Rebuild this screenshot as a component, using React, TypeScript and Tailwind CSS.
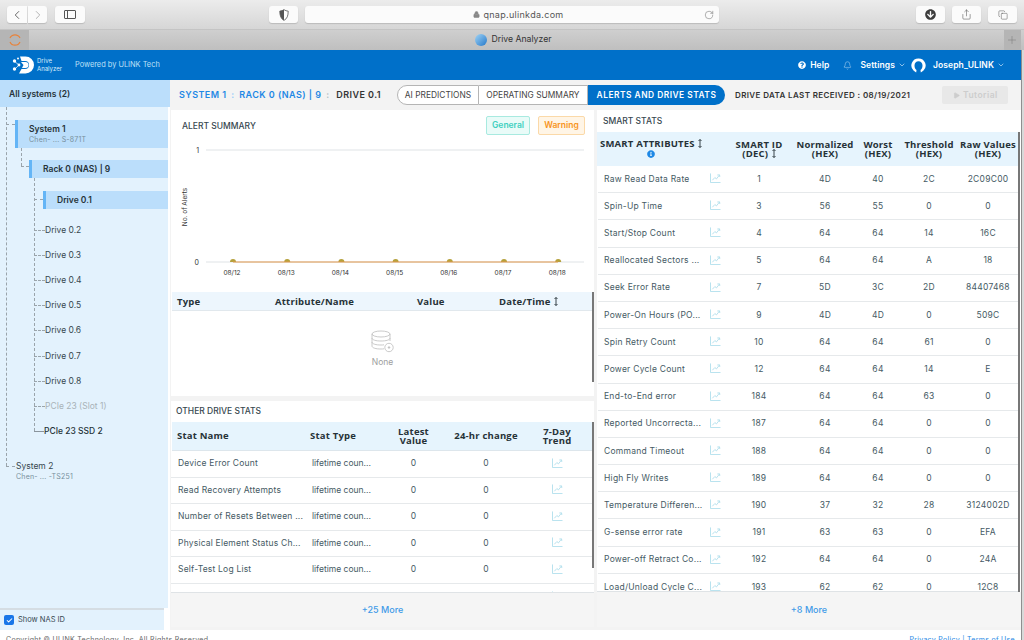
import React from "react";
import { ChevronLeft, ChevronRight, Lock, RotateCw, Share, Copy, Bell, ChevronDown, Play, Plus, Check } from "lucide-react";
import { FaQuestionCircle, FaInfoCircle, FaArrowCircleDown } from "react-icons/fa";

const Trend = () => (
  <svg width="11" height="10" viewBox="0 0 12 11" fill="none" stroke="#a8dcea" strokeWidth="0.9" className="block -mt-[2px]">
    <path d="M0.5 0.5v10h11" />
    <path d="M2.5 8l2.8-3 1.700 1.500 3.200-4" />
    <path d="M8 2.200l2.500-0.200 0.200 2.400" />
  </svg>
);
const Sort = () => (
  <svg width="4" height="9" viewBox="0 0 4 9" fill="none" stroke="#263238" strokeWidth="0.9" className="inline-block align-[-1px] ml-[1px]">
    <path d="M2 0.500v8M0.500 2l1.500-1.500 1.500 1.500M0.500 7l1.500 1.500 1.500-1.500" />
  </svg>
);

const smart: string[][] = [
  ["Raw Read Data Rate", "1", "4D", "40", "2C", "2C09C00"],
  ["Spin-Up Time", "3", "56", "55", "0", "0"],
  ["Start/Stop Count", "4", "64", "64", "14", "16C"],
  ["Reallocated Sectors ...", "5", "64", "64", "A", "18"],
  ["Seek Error Rate", "7", "5D", "3C", "2D", "84407468"],
  ["Power-On Hours (PO...", "9", "4D", "4D", "0", "509C"],
  ["Spin Retry Count", "10", "64", "64", "61", "0"],
  ["Power Cycle Count", "12", "64", "64", "14", "E"],
  ["End-to-End error", "184", "64", "64", "63", "0"],
  ["Reported Uncorrecta...", "187", "64", "64", "0", "0"],
  ["Command Timeout", "188", "64", "64", "0", "0"],
  ["High Fly Writes", "189", "64", "64", "0", "0"],
  ["Temperature Differen...", "190", "37", "32", "28", "3124002D"],
  ["G-sense error rate", "191", "63", "63", "0", "EFA"],
  ["Power-off Retract Co...", "192", "64", "64", "0", "24A"],
  ["Load/Unload Cycle C...", "193", "62", "62", "0", "12C8"],
];
const stats = ["Device Error Count", "Read Recovery Attempts", "Number of Resets Between ...", "Physical Element Status Ch...", "Self-Test Log List"];
const drives = ["Drive 0.2", "Drive 0.3", "Drive 0.4", "Drive 0.5", "Drive 0.6", "Drive 0.7", "Drive 0.8"];
const days = ["08/12", "08/13", "08/14", "08/15", "08/16", "08/17", "08/18"];
const hdr = "font-['Open_Sans',sans-serif] font-bold text-[9.5px] leading-[9px] tracking-[0.2px] text-[#263238]";

const Dash = ({ c }: { c: string }) => <span className={"absolute border-[#9aa4ab] border-dashed " + c} />;

function Logo() {
  return (
    <svg width="22" height="18" viewBox="0 0 22 18" className="shrink-0">
      <path d="M8 0.500h5.500a8.500 8.500 0 0 1 0 17H7l2.500-4.500h3.500a4 4 0 0 0 0-8H9.500z" fill="#fff" />
      <path d="M9 6h4.500a3 3 0 0 1 0 6h-3.500l1.500-3z" fill="#fff" />
      <path d="M2 5l5 4-4 4" stroke="#fff" strokeWidth="0.7" fill="none" />
      <circle cx="2.500" cy="5" r="1.700" fill="#fff" />
      <circle cx="6" cy="2.500" r="1" fill="#fff" />
      <circle cx="2.500" cy="13" r="1.700" fill="#fff" />
      <circle cx="7" cy="9" r="1.400" fill="#fff" />
    </svg>
  );
}

function Chrome() {
  const b = "h-[17px] rounded-[3px] bg-[#fbfbfb] flex items-center justify-center shadow-[0_1px_1px_#bbb] text-[#555]";
  return (
    <div className="h-[30px] shrink-0 bg-gradient-to-b from-[#ececec] to-[#d6d6d6] flex items-center border-b border-[#c4c4c4] relative">
      <div className={b + " w-[20px] ml-[7px] rounded-r-none"}><ChevronLeft size={14} strokeWidth={1.5} /></div>
      <div className={b + " w-[19px] ml-[1px] rounded-l-none text-[#aaa]"}><ChevronRight size={14} strokeWidth={1.5} /></div>
      <div className={b + " w-[30px] ml-[8px]"}>
        <span className="w-[12px] h-[9px] border border-[#555] rounded-[1px] flex"><span className="w-[3px] border-r border-[#555]" /></span>
      </div>
      <div className={b + " w-[29px] ml-[184px]"}>
        <svg width="10" height="12" viewBox="0 0 10 12"><path d="M5 0.600c1.300 1 2.700 1.400 4.200 1.500 0 4.500-1 7.600-4.200 9.300C1.800 9.700.8 6.600.8 2.100 2.300 2 3.700 1.600 5 .6z" fill="#fff" stroke="#555" strokeWidth="0.8" /><path d="M5 .6v10.800C1.800 9.700.8 6.600.8 2.100 2.300 2 3.700 1.600 5 .6z" fill="#555" /></svg>
      </div>
      <div className={b + " w-[414px] ml-[7px] relative text-[#444] text-[9px] gap-[3px] pl-[13px]"}>
        <Lock size={7} fill="#888" className="text-[#888]" /><span className="tracking-[0.3px]">qnap.ulinkda.com</span>
        <RotateCw size={10} strokeWidth={1.2} className="absolute right-[5px] text-[#666]" />
      </div>
      <div className={b + " w-[29px] ml-[197px]"}><FaArrowCircleDown size={11} className="text-[#3d3d3d]" /></div>
      <div className={b + " w-[29px] ml-[7px]"}><Share size={11} strokeWidth={1.2} /></div>
      <div className={b + " w-[29px] ml-[7px]"}><Copy size={10} strokeWidth={1.2} /></div>
    </div>
  );
}

function Tabs() {
  return (
    <div className="h-[20px] shrink-0 bg-gradient-to-b from-[#cfcfcf] to-[#bfbfbf] flex items-center justify-between text-[8.7px] text-[#333]">
      <div className="w-[29px] h-full bg-[#b5b5b5] flex items-center justify-center">
        <svg width="14" height="14" viewBox="0 0 14 14" fill="none" stroke="#e8823a" strokeWidth="1.2"><path d="M2 5a5.500 5.500 0 0 1 10 0" /><path d="M2 9a5.500 5.500 0 0 0 10 0" /></svg>
      </div>
      <div className="flex items-center gap-[4px] ml-[-6px]">
        <span className="w-[12px] h-[12px] rounded-full bg-gradient-to-br from-[#9fd4f5] to-[#1d78c9]" />
        <span>Drive Analyzer</span>
      </div>
      <div className="w-[17px] h-full mr-[3px] bg-[#b5b5b5] flex items-center justify-center text-[#777]"><Plus size={12} strokeWidth={1} /></div>
    </div>
  );
}

function Header() {
  return (
    <div className="h-[30px] shrink-0 bg-[#0070c9] flex items-center text-white">
      <div className="ml-[12px]"><Logo /></div>
      <div className="ml-[3px] text-[6px] leading-[8px] text-[#d8ecfb] w-[26px]">Drive<br />Analyzer</div>
      <div className="ml-[12px] text-[7.4px] text-[#bfe0f8]">Powered by ULINK Tech</div>
      <div className="ml-auto flex items-center text-[8.5px] font-semibold tracking-[0.1px]">
        <FaQuestionCircle size={8} />
        <span className="ml-[4px]">Help</span>
        <Bell size={9} strokeWidth={1.2} className="ml-[14px] text-[#cfe6f8]" />
        <span className="ml-[8px]">Settings</span>
        <ChevronDown size={8} className="ml-[3px] text-[#cfe6f8]" />
        <svg width="15" height="15" viewBox="0 0 15 15" className="ml-[5px]">
          <path d="M7.500 0.500a7 7 0 0 0-5 12c0.600 0.600 2.700 2 2.700 2l0.300-2.500c-1.300-.8-2-2.500-2-4.500 0-2.500 1.600-4.200 4-4.200s4 1.700 4 4.200c0 2-.7 3.700-2 4.500l0.300 2.500s2.100-1.400 2.700-2a7 7 0 0 0-5-12z" fill="#fff" />
        </svg>
        <span className="ml-[7px]">Joseph_ULINK</span>
        <ChevronDown size={8} className="ml-[3px] mr-[16px] text-[#cfe6f8]" />
      </div>
    </div>
  );
}

function Sidebar() {
  return (
    <div className="w-[170px] shrink-0 flex flex-col text-[#37474f]">
      <div className="h-[27px] shrink-0 bg-[#bbdefb] flex items-center pl-[9px] pt-[1px] text-[8.5px] font-semibold text-[#263238]">All systems (2)</div>
      <div className="flex-1 w-[168px] bg-[#e3f2fd] relative pt-[13px] text-[8.5px]">
        <Dash c="left-[6px] top-0 h-[359px] border-l" />
        <Dash c="left-[6px] top-[17px] w-[9px] border-t" />
        <Dash c="left-[6px] top-[359px] w-[9px] border-b" />
        <div className="ml-[15px] h-[28px] bg-[#bbdefb] border-l-[3px] border-[#64b5f6] pl-[11px] flex flex-col justify-center">
          <div className="font-semibold text-[#263238] leading-[11px]">System 1</div>
          <div className="text-[7px] leading-[9px] text-[#78909c] tracking-[0.2px]">Chen- ... S-871T</div>
        </div>
        <Dash c="left-[21px] top-[41px] h-[18px] border-l" />
        <Dash c="left-[21px] top-[59px] w-[8px] border-b" />
        <div className="ml-[29px] mt-[12px] h-[18px] bg-[#bbdefb] border-l-[3px] border-[#64b5f6] pl-[11px] flex items-center font-semibold text-[#263238]">Rack 0 (NAS) | 9</div>
        <Dash c="left-[34px] top-[71px] h-[253px] border-l" />
        <Dash c="left-[34px] top-[92px] w-[9px] border-t" />
        <div className="ml-[43px] mt-[13px] h-[18px] bg-[#bbdefb] border-l-[3px] border-[#64b5f6] pl-[11px] flex items-center font-semibold text-[#263238]">Drive 0.1</div>
        <div className="mt-[8.5px]">
          {drives.map((d) => (
            <div key={d} className="h-[25.2px] ml-[34px] flex items-center">
              <span className="w-[11px] border-t border-dashed border-[#9aa4ab]" />{d}
            </div>
          ))}
          <div className="h-[25.2px] ml-[34px] flex items-center text-[#a9b2b8]"><span className="w-[11px] border-t border-dashed border-[#9aa4ab]" />PCIe 23 (Slot 1)</div>
          <div className="h-[25.2px] ml-[34px] flex items-center font-medium text-[#263238]"><span className="w-[10px] border-t border-[#8a949c]" />PCIe 23 SSD 2</div>
        </div>
        <div className="ml-[16px] mt-[17px] text-[#37474f] leading-[11px]">System 2</div>
        <div className="ml-[16px] text-[7px] leading-[9px] text-[#78909c] tracking-[0.2px]">Chen- ... -TS251</div>
      </div>
      <div className="h-[22px] w-[164px] shrink-0 border-t-2 border-[#d5dde3] bg-[#e3f2fd] flex items-center pl-[4px] gap-[4px] text-[7.5px]">
        <span className="w-[10px] h-[10px] rounded-[2px] bg-[#1976e8] flex items-center justify-center"><Check size={7} strokeWidth={3.5} className="text-white" /></span>
        Show NAS ID
      </div>
    </div>
  );
}

function Crumbs() {
  return (
    <div className="h-[30px] shrink-0 flex items-center text-[9px] tracking-[0.45px]">
      <div className="ml-[9px] font-semibold text-[#1e88e5] whitespace-nowrap">SYSTEM 1 <span className="text-[#90caf9] mx-[2px]">:</span> RACK 0 (NAS) | 9 <span className="text-[#b0bec5] mx-[2px]">:</span> <span className="text-[#333] ml-[2px]">DRIVE 0.1</span></div>
      <div className="ml-[16px] h-[20px] flex text-[8.4px] tracking-[0px] whitespace-nowrap">
        <div className="w-[82px] border border-[#b5b5b5] rounded-l-full bg-white flex items-center justify-center text-[#444]">AI PREDICTIONS</div>
        <div className="w-[109px] border-y border-r border-[#b5b5b5] bg-white flex items-center justify-center text-[#444]">OPERATING SUMMARY</div>
        <div className="w-[137px] rounded-r-full bg-[#0070c9] text-white font-semibold tracking-[0.5px] flex items-center justify-center">ALERTS AND DRIVE STATS</div>
      </div>
      <div className="ml-[10px] text-[8px] font-semibold tracking-[0.38px] text-[#333] whitespace-nowrap">DRIVE DATA LAST RECEIVED : 08/19/2021</div>
      <div className="ml-[32px] w-[66px] h-[18px] rounded-[2px] bg-[#e8e8e8] text-[#cdcdcd] font-semibold flex items-center justify-center gap-[3px] text-[8.5px]"><Play size={7} fill="#cdcdcd" />Tutorial</div>
    </div>
  );
}

function AlertChart() {
  return (
    <svg width="423" height="150" viewBox="0 0 423 150" className="block">
      <text x="0" y="0" transform="translate(16 67) rotate(-90)" fontSize="6.5" textAnchor="middle" fill="#333">No. of Alerts</text>
      <text x="28" y="12.500" fontSize="7" textAnchor="end" fill="#333">1</text>
      <text x="28" y="124.500" fontSize="7" textAnchor="end" fill="#333">0</text>
      <line x1="35" x2="413" y1="10" y2="10" stroke="#dfe3e6" />
      <line x1="35" x2="413" y1="122" y2="122" stroke="#dfe3e6" />
      {days.map((d, i) => (
        <g key={d}>
          <path d={`M${59 + i * 54.2} 122a3 3 0 0 1 6 0z`} fill="#b5a13c" />
          <text x={62 + i * 54.2 - 1} y="135" fontSize="6.5" textAnchor="middle" fill="#333">{d}</text>
        </g>
      ))}
      <line x1="62" x2="387" y1="122" y2="122" stroke="#e0974a" />
    </svg>
  );
}

function EmptyIcon() {
  return (
    <svg width="24" height="24" viewBox="0 0 24 24" fill="none" stroke="#bdbdbd" strokeWidth="0.8">
      <ellipse cx="10" cy="4" rx="9" ry="3" />
      <path d="M1 4v12c0 2 4 3 9 3 1 0 2 0 3-.2M19 4v7M1 8c0 2 4 3 9 3s9-1 9-3M1 12c0 2 4 3 9 3 1 0 2 0 3-.2" />
      <circle cx="18" cy="17.500" r="4.200" fill="#fff" />
      <circle cx="18" cy="17.500" r="0.800" fill="#bdbdbd" />
    </svg>
  );
}

function Left() {
  return (
    <div className="w-[423px] shrink-0 flex flex-col gap-[5px]">
      <div className="h-[286px] bg-white shrink-0 flex flex-col relative">
        <div className="h-[30px] flex items-center pl-[11px] pr-[9px] text-[8.5px] text-[#37474f] font-medium">
          <span className="mt-[2px]">ALERT SUMMARY</span>
          <span className="ml-auto w-[44px] h-[19px] border border-[#a8eae0] bg-[#e9fbf8] rounded-[2px] text-[#3fd0c0] flex items-center justify-center font-semibold">General</span>
          <span className="ml-[8px] w-[47px] h-[19px] border border-[#fbd9a8] bg-[#fff5e6] rounded-[2px] text-[#f7941d] flex items-center justify-center font-semibold">Warning</span>
        </div>
        <AlertChart />
        <div className="h-[19px] w-[421px] ml-[1px] mt-[2px] bg-[#edf6fd] grid grid-cols-[98px_142px_82px_1fr] items-center pl-[5px] border-b border-[#e1e8ed]">
          <span className={hdr}>Type</span><span className={hdr}>Attribute/Name</span><span className={hdr}>Value</span>
          <span className={hdr}>Date/Time <Sort /></span>
        </div>
        <div className="flex flex-col items-center pt-[19px] text-[#9e9e9e] text-[8.5px] gap-[2px]">
          <EmptyIcon />None
        </div>
        <span className="absolute right-0 top-[182px] w-[2px] h-[90px] bg-[#777]" />
      </div>
      <div className="flex-1 bg-white flex flex-col relative min-h-0">
        <div className="h-[21px] shrink-0 flex items-center pl-[5px] text-[8.5px] text-[#37474f] font-medium">OTHER DRIVE STATS</div>
        <div className="h-[29px] shrink-0 ml-[1px] w-[421px] bg-[#e6f4fd] border-b border-[#dde6ec] grid grid-cols-[133px_76px_55px_90px_52px_1fr] pl-[5px] pb-[1px] items-center text-center">
          <span className={hdr + " text-left"}>Stat Name</span><span className={hdr + " text-left"}>Stat Type</span>
          <span className={hdr}>Latest Value</span><span className={hdr}>24-hr change</span><span className={hdr}>7-Day Trend</span><span />
        </div>
        <div className="h-[142px] overflow-hidden shrink-0 border-b border-[#dfe3e6]">
          {stats.map((s) => (
            <div key={s} className="h-[26.5px] border-b border-[#e6e9eb] grid grid-cols-[140px_75px_55px_90px_52px_1fr] items-center text-center text-[8.5px] tracking-[0.2px] text-[#455a64]">
              <span className="text-left pl-[7px] whitespace-nowrap">{s}</span>
              <span className="text-left pl-[1px] whitespace-nowrap tracking-[0px]">lifetime coun...</span>
              <span>0</span><span>0</span><span className="flex justify-center"><Trend /></span><span />
            </div>
          ))}
          <div className="h-[26.5px] grid grid-cols-[270px_90px_52px_1fr] items-center"><span /><span /><span className="flex justify-center"><Trend /></span></div>
        </div>
        <div className="flex-1 bg-[#f5f5f5] flex items-center justify-center text-[#3f9be8] text-[9px] font-medium">+25 More</div>
        <span className="absolute right-0 top-[21px] w-[2px] h-[146px] bg-[#777]" />
      </div>
    </div>
  );
}

function Right() {
  const cols = "grid-cols-[108px_19px_68px_64px_42px_60px_58px]";
  return (
    <div className="w-[424px] shrink-0 bg-white flex flex-col relative">
      <div className="h-[22px] shrink-0 flex items-center pl-[6px] text-[8.5px] text-[#37474f] font-medium">SMART STATS</div>
      <div className={"h-[34px] shrink-0 bg-[#e6f4fd] pl-[1px] w-[421px] grid items-center text-center whitespace-nowrap " + cols}>
        <div className={hdr + " col-span-2 text-left pl-[2px] flex flex-col items-start -mt-[2px]"}>
          <span>SMART ATTRIBUTES <Sort /></span>
          <FaInfoCircle size={8} className="text-[#1e88e5] ml-[47px] mt-[2px]" />
        </div>
        <span className={hdr}>SMART ID<br />(DEC) <Sort /></span>
        <span className={hdr}>Normalized<br />(HEX)</span>
        <span className={hdr}>Worst<br />(HEX)</span>
        <span className={hdr}>Threshold<br />(HEX)</span>
        <span className={hdr}>Raw Values<br />(HEX)</span>
      </div>
      <div className="h-[426px] overflow-hidden shrink-0 border-b border-[#dfe3e6] w-[421px] pl-[1px]">
        {smart.map((r) => (
          <div key={r[0]} className={"h-[27.2px] border-b border-[#e6e9eb] grid items-center text-center text-[8.5px] tracking-[0.25px] text-[#455a64] " + cols}>
            <span className="text-left pl-[6px] whitespace-nowrap">{r[0]}</span>
            <span className="flex justify-center"><Trend /></span>
            <span>{r[1]}</span><span>{r[2]}</span><span>{r[3]}</span><span>{r[4]}</span><span>{r[5]}</span>
          </div>
        ))}
      </div>
      <div className="flex-1 bg-[#f5f5f5] flex items-center justify-center text-[#3f9be8] text-[9px] font-medium">+8 More</div>
      <span className="absolute right-[1px] top-[22px] w-[2px] h-[460px] bg-[#777]" />
    </div>
  );
}

export default function App() {
  return (
    <div className="w-[1024px] h-[640px] overflow-hidden flex flex-col bg-white font-['Inter',sans-serif]">
      <Chrome />
      <Tabs />
      <div className="flex-1 flex min-h-0">
        <div className="w-[1021px] shrink-0 flex flex-col min-h-0">
          <Header />
          <div className="flex-1 flex min-h-0">
            <Sidebar />
            <div className="flex-1 flex flex-col bg-[#f3f3f3] min-w-0">
              <Crumbs />
              <div className="flex-1 flex pl-[1px] gap-[3px] pb-[3px] min-h-0">
                <Left /><Right />
              </div>
            </div>
          </div>
          <div className="h-[10px] shrink-0 bg-white flex items-start justify-between px-[6px] pt-[5px] text-[7px] leading-[9px] text-[#666] tracking-[0.3px]">
            <span>Copyright © ULINK Technology, Inc. All Rights Reserved</span>
            <span className="text-[#1e88e5]">Privacy Policy | Terms of Use</span>
          </div>
        </div>
        <div className="w-[3px] shrink-0 bg-[#d9d9d9] border-l border-[#8f8f8f]" />
      </div>
    </div>
  );
}
